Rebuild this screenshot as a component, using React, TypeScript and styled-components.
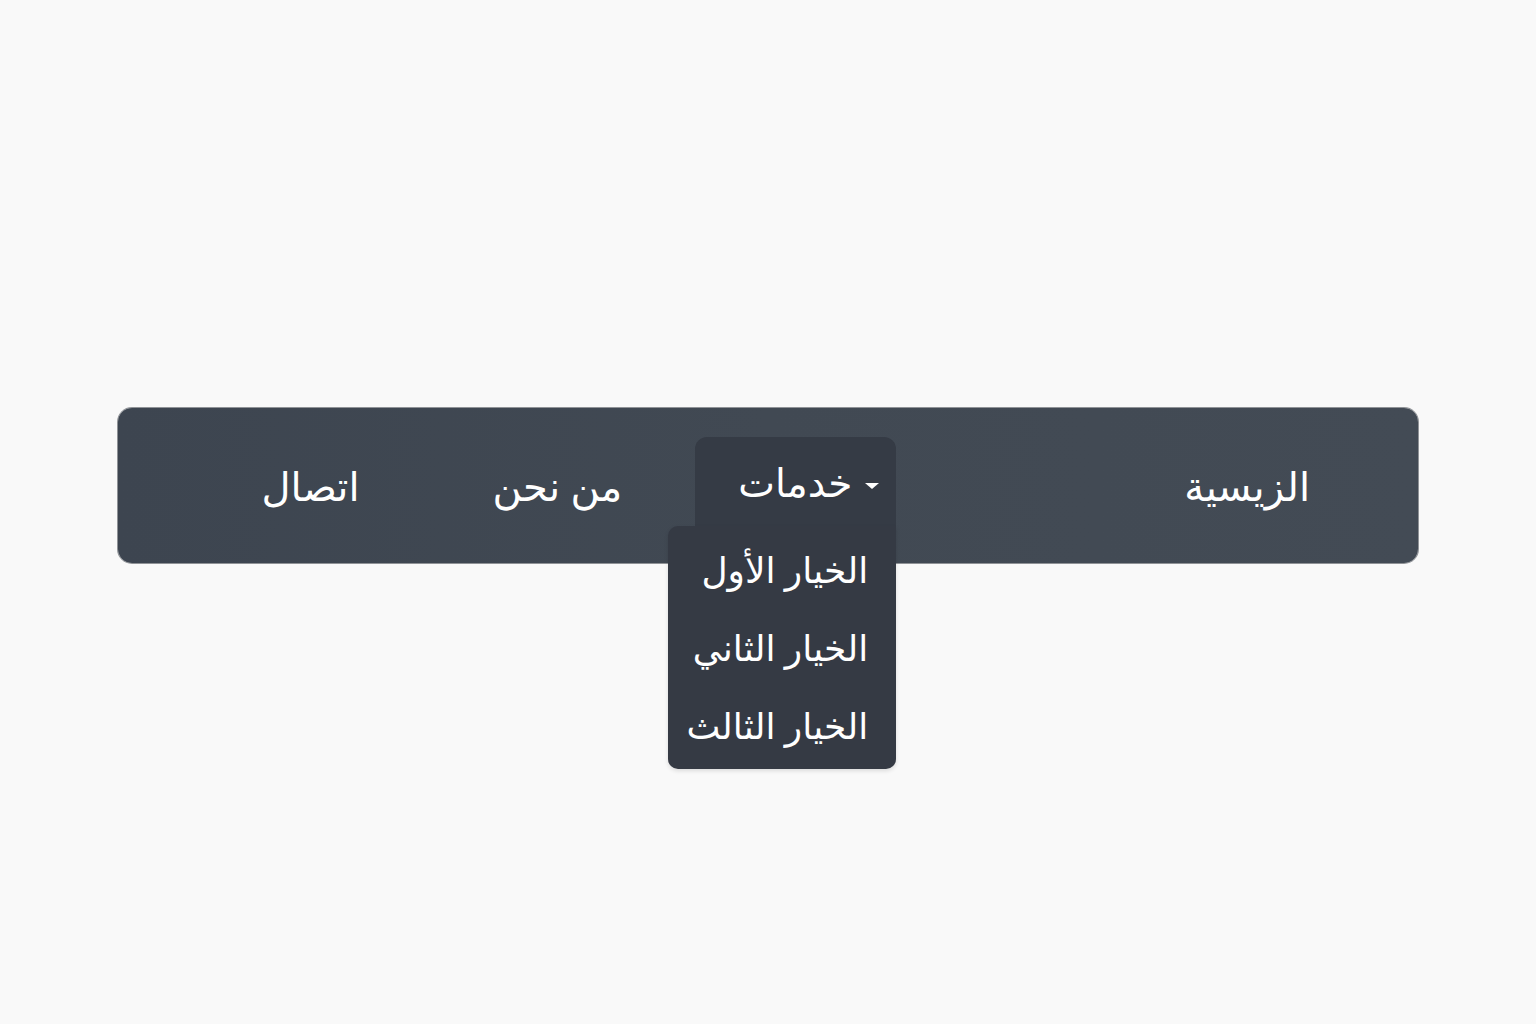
import styled, { createGlobalStyle } from 'styled-components';

const GlobalStyle = createGlobalStyle`
  html, body {
    margin: 0;
    padding: 0;
    background: #f9f9f9;
  }
  body {
    font-family: "Noto Sans", "DejaVu Sans", sans-serif;
  }
`;

const Page = styled.div`
  height: 1024px;
  display: flex;
  justify-content: center;
  padding-top: 408px;
  box-sizing: border-box;
`;

const NavBar = styled.nav`
  direction: rtl;
  width: 1300px;
  height: 155px;
  box-sizing: border-box;
  display: flex;
  align-items: center;
  padding-right: 108px;
  border-radius: 14px;
  background: linear-gradient(90deg, #3d4550 0%, #414953 50%, #434b55 100%);
  box-shadow: 0 0 0 1px rgba(40, 46, 54, 0.5);
`;

const NavLink = styled.a<{ $gap?: number }>`
  color: #ffffff;
  font-size: 40px;
  font-weight: 500;
  line-height: 1;
  text-decoration: none;
  margin-right: ${(p) => p.$gap ?? 0}px;
  white-space: nowrap;
  cursor: pointer;
`;

const MenuWrap = styled.div<{ $gap: number }>`
  position: relative;
  margin-right: ${(p) => p.$gap}px;
`;

const MenuButton = styled.button`
  direction: rtl;
  width: 201px;
  height: 89px;
  margin-top: -8px;
  box-sizing: border-box;
  display: flex;
  align-items: center;
  gap: 13px;
  padding: 0 17px 0 0;
  border: 0;
  border-radius: 12px 12px 0 0;
  background: #353b45;
  color: #ffffff;
  font-family: inherit;
  font-size: 39px;
  font-weight: 500;
  cursor: pointer;
`;

const Caret = styled.span`
  width: 0;
  height: 0;
  border-left: 7px solid transparent;
  border-right: 7px solid transparent;
  border-top: 6px solid #ffffff;
  margin-top: 8px;
`;

const Dropdown = styled.ul`
  position: absolute;
  top: 100%;
  right: 0;
  width: 228px;
  margin: 0;
  padding: 4px 0 5px;
  list-style: none;
  box-sizing: border-box;
  border-radius: 10px 0 10px 10px;
  background: #353a44;
  box-shadow: 0 2px 4px rgba(0, 0, 0, 0.12);
`;

const DropItem = styled.li`
  height: 78px;
  display: flex;
  align-items: center;
  padding-right: 28px;
  color: #ffffff;
  font-size: 36px;
  font-weight: 500;
  white-space: nowrap;
  cursor: pointer;
`;

export default function App() {
  return (
    <>
      <GlobalStyle />
      <Page>
        <NavBar>
          <NavLink>الزيسية</NavLink>
          <MenuWrap $gap={288}>
            <MenuButton>
              <Caret />
              <span>خدمات</span>
            </MenuButton>
            <Dropdown>
              <DropItem>الخيار الأول</DropItem>
              <DropItem>الخيار الثاني</DropItem>
              <DropItem>الخيار الثالث</DropItem>
            </Dropdown>
          </MenuWrap>
          <NavLink $gap={73}>من نحن</NavLink>
          <NavLink $gap={133}>اتصال</NavLink>
        </NavBar>
      </Page>
    </>
  );
}
